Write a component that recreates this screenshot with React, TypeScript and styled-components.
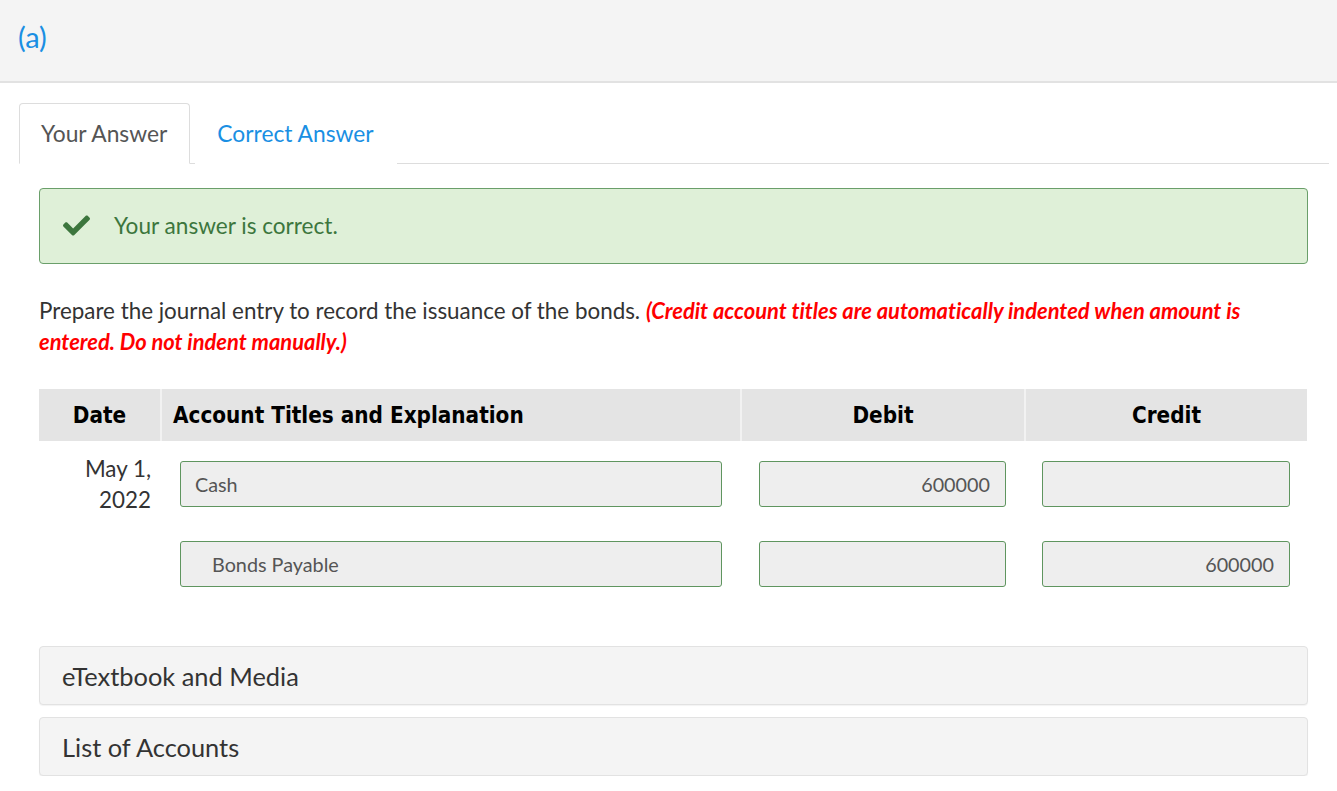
import React from "react";
import styled, { createGlobalStyle } from "styled-components";
import { FaCheck } from "react-icons/fa";

const GlobalStyle = createGlobalStyle`
  body {
    margin: 0;
    background: #fff;
    font-family: Lato, "Open Sans", sans-serif;
    color: #333;
    font-variant-ligatures: none;
  }
`;

const TopBar = styled.div`
  height: 83px;
  background: #f4f4f4;
  border-bottom: 2px solid #e2e2e2;
  display: flex;
  align-items: center;
  padding-left: 18px;
  box-sizing: border-box;
`;

const PartLabel = styled.span`
  font-size: 29px;
  color: #1a8fe3;
  margin-top: -9px;
`;

const Content = styled.div`
  padding: 20px 8px 0 19px;
`;

const TabBar = styled.div`
  display: flex;
  border-bottom: 1px solid #ddd;
`;

const Tab = styled.div<{ $active?: boolean }>`
  height: 61px;
  box-sizing: border-box;
  padding: 0 22px 2px 21px;
  margin-right: 5px;
  display: flex;
  align-items: center;
  font-size: 22.8px;
  margin-bottom: -1px;
  border: 1px solid ${(p) => (p.$active ? "#ddd" : "transparent")};
  border-bottom-color: ${(p) => (p.$active ? "#fff" : "transparent")};
  border-radius: 4px 4px 0 0;
  background: #fff;
  color: ${(p) => (p.$active ? "#555" : "#1a8fe3")};
`;

const Panel = styled.div`
  padding: 24px 21px 0 20px;
`;

const Alert = styled.div`
  height: 76px;
  box-sizing: border-box;
  background: #dff0d8;
  border: 1px solid #6a9f6a;
  border-radius: 4px;
  display: flex;
  align-items: center;
  padding: 0 0 2px 23px;
  color: #3c763d;
  font-size: 22.6px;
  gap: 24px;
`;

const Prompt = styled.p`
  margin: 31px 0 0;
  font-size: 22.4px;
  line-height: 31px;
  color: #333;
`;

const Note = styled.span`
  color: #ff0000;
  font-weight: bold;
  font-style: italic;
  font-size: 21.9px;
`;

const Journal = styled.div`
  margin-top: 32px;
  display: grid;
  grid-template-columns: 121px 580px 284px 283px;
  grid-template-rows: 52px 80px 66px;
`;

const HeadCell = styled.div<{ $left?: boolean }>`
  background: #e4e4e4;
  display: flex;
  align-items: center;
  justify-content: ${(p) => (p.$left ? "flex-start" : "center")};
  padding-left: ${(p) => (p.$left ? "11px" : "0")};
  border-left: 2px solid #f2f2f2;
  font-family: "DejaVu Sans Condensed", "DejaVu Sans", sans-serif;
  font-weight: bold;
  font-size: 22.3px;
  color: #000;
  &:first-child {
    border-left: none;
  }
`;

const DateCell = styled.div`
  text-align: right;
  padding: 12px 9px 0 0;
  font-size: 22.4px;
  line-height: 31px;
  color: #333;
`;

const Cell = styled.div<{ $pl: number; $pr: number }>`
  padding: 20px ${(p) => p.$pr}px 0 ${(p) => p.$pl}px;
`;

const Field = styled.div<{ $right?: boolean; $indent?: boolean }>`
  height: 46px;
  box-sizing: border-box;
  background: #eeeeee;
  border: 1px solid #5f955f;
  border-radius: 3px;
  display: flex;
  align-items: center;
  justify-content: ${(p) => (p.$right ? "flex-end" : "flex-start")};
  padding: 0 15px 1px ${(p) => (p.$indent ? "31px" : "14px")};
  font-size: 19.8px;
  color: #555;
`;

const Sections = styled.div`
  margin-top: 59px;
  display: flex;
  flex-direction: column;
  gap: 12px;
`;

const Section = styled.div`
  height: 59px;
  box-sizing: border-box;
  background: #f4f4f4;
  border: 1px solid #e2e2e2;
  border-radius: 4px;
  box-shadow: 0 1px 1px rgba(0, 0, 0, 0.05);
  display: flex;
  align-items: center;
  padding-left: 22px;
  font-size: 25.4px;
  color: #333;
`;

type Line = { account: string; debit: string; credit: string; indent?: boolean };

const lines: Line[] = [
  { account: "Cash", debit: "600000", credit: "" },
  { account: "Bonds Payable", debit: "", credit: "600000", indent: true },
];

function App() {
  return (
    <>
      <GlobalStyle />
      <TopBar>
        <PartLabel>(a)</PartLabel>
      </TopBar>
      <Content>
        <TabBar>
          <Tab $active>Your Answer</Tab>
          <Tab>Correct Answer</Tab>
        </TabBar>
        <Panel>
          <Alert>
            <FaCheck size={27} color="#3c763d" />
            <span>Your answer is correct.</span>
          </Alert>
          <Prompt>
            Prepare the journal entry to record the issuance of the bonds.{" "}
            <Note>
              (Credit account titles are automatically indented when amount is entered. Do not
              indent manually.)
            </Note>
          </Prompt>
          <Journal>
            <HeadCell>Date</HeadCell>
            <HeadCell $left>Account Titles and Explanation</HeadCell>
            <HeadCell>Debit</HeadCell>
            <HeadCell>Credit</HeadCell>
            {lines.map((l, i) => (
              <React.Fragment key={i}>
                <DateCell>
                  {i === 0 ? (
                    <>
                      May 1,
                      <br />
                      2022
                    </>
                  ) : null}
                </DateCell>
                <Cell $pl={20} $pr={18}>
                  <Field $indent={l.indent}>{l.account}</Field>
                </Cell>
                <Cell $pl={19} $pr={18}>
                  <Field $right>{l.debit}</Field>
                </Cell>
                <Cell $pl={18} $pr={17}>
                  <Field $right>{l.credit}</Field>
                </Cell>
              </React.Fragment>
            ))}
          </Journal>
          <Sections>
            <Section>eTextbook and Media</Section>
            <Section>List of Accounts</Section>
          </Sections>
        </Panel>
      </Content>
    </>
  );
}

export default App;
